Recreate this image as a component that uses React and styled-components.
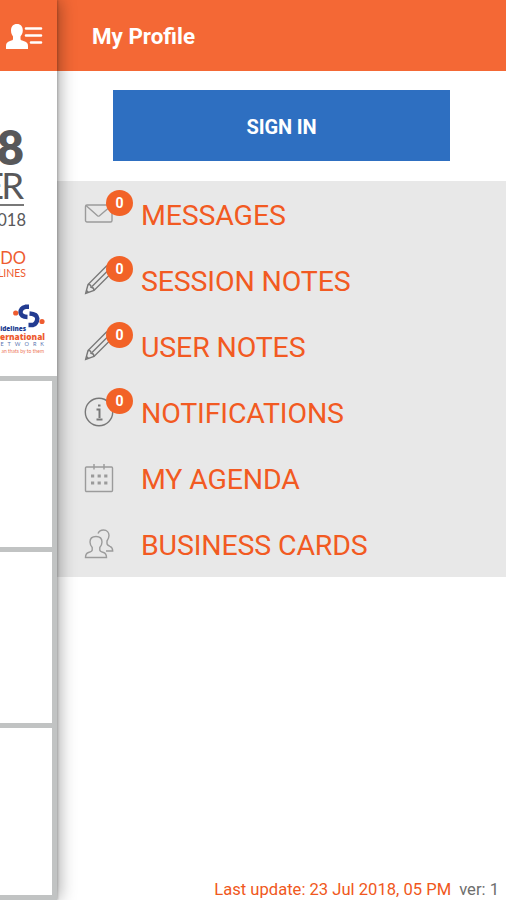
import React from 'react';
import styled, { createGlobalStyle } from 'styled-components';

const GlobalStyle = createGlobalStyle`
  * {
    box-sizing: border-box;
  }

  body {
    margin: 0;
    font-family: Roboto, 'Liberation Sans', sans-serif;
    background-color: white;
  }
`;

const StyledPage = styled.div`
  display: flex;
  height: 900px;
  width: 506px;
  overflow: hidden;
`;

const StyledMain = styled.div`
  position: relative;
  z-index: 1;
  display: flex;
  flex-direction: column;
  flex: 0 0 57px;
  height: 900px;
  background-color: rgb(193, 195, 195);
  box-shadow: 1px 0 2px rgba(0, 0, 0, 0.18), 2px 0 16px rgba(0, 0, 0, 0.36);
`;

const StyledMainHeader = styled.div`
  height: 71px;
  flex-shrink: 0;
  padding: 23px 0 0 6px;
  background-color: rgb(244, 104, 53);
`;

const StyledBanner = styled.div`
  display: flex;
  flex-direction: column;
  height: 305px;
  flex-shrink: 0;
  overflow: hidden;
  background-color: white;
`;

const StyledBannerText = styled.div`
  display: flex;
  flex-shrink: 0;
  justify-content: flex-end;
  width: ${(props) => props.$right}px;
  height: ${(props) => props.$height}px;
  line-height: ${(props) => props.$height}px;
  margin-top: ${(props) => props.$top || 0}px;
  font-family: ${(props) => props.$font || 'Lato'}, sans-serif;
  font-size: ${(props) => props.$size}px;
  font-weight: ${(props) => props.$weight || 400};
  letter-spacing: ${(props) => props.$spacing || 0}px;
  color: ${(props) => props.$color || 'rgb(88, 88, 90)'};
  white-space: nowrap;
`;

const StyledRule = styled.div`
  width: 24px;
  height: 2px;
  margin-top: 2px;
  flex-shrink: 0;
  background-color: rgb(120, 120, 120);
`;

const StyledLogo = styled.svg`
  display: block;
  flex-shrink: 0;
  margin: 24px 0 0 12px;
`;

const StyledTiles = styled.div`
  display: flex;
  flex-direction: column;
  gap: 5px;
  padding: 5px 5px 5px 0;
`;

const StyledTile = styled.div`
  height: ${(props) => props.$height}px;
  background-color: white;
`;

const StyledDrawer = styled.div`
  display: flex;
  flex-direction: column;
  flex: 1;
  background-color: white;
`;

const StyledDrawerHeader = styled.div`
  height: 71px;
  padding-left: 35px;
  line-height: 73px;
  background-color: rgb(244, 104, 53);
  color: white;
  font-size: 22.4px;
  font-weight: 700;
`;

const StyledSignInArea = styled.div`
  height: 110px;
  padding: 19px 56px 20px;
`;

const StyledSignIn = styled.button`
  display: block;
  width: 100%;
  height: 71px;
  padding: 2px 0 0;
  border: none;
  background-color: rgb(46, 111, 193);
  color: white;
  font-family: inherit;
  font-size: 20px;
  font-weight: 700;
  letter-spacing: -0.1px;
`;

const StyledMenu = styled.div`
  height: 396px;
  background-color: rgb(232, 232, 232);
`;

const StyledItem = styled.div`
  display: flex;
  align-items: center;
  height: 66px;
  padding-left: 27px;
`;

const StyledIcon = styled.div`
  position: relative;
  width: 30px;
  height: 30px;
  margin-right: 27px;

  svg {
    display: block;
    fill: none;
    stroke: ${(props) => (props.$light ? 'rgb(155, 155, 155)' : 'rgb(120, 120, 120)')};
    stroke-width: 1.4;
  }
`;

const StyledBadge = styled.span`
  position: absolute;
  left: 22px;
  top: -9px;
  width: 27px;
  height: 26px;
  border-radius: 50%;
  background-color: rgb(242, 98, 39);
  color: white;
  font-size: 14px;
  font-weight: 700;
  line-height: 27px;
  text-align: center;
`;

const StyledLabel = styled.span`
  padding-top: 2px;
  color: rgb(242, 90, 34);
  font-size: 28.5px;
  font-weight: 400;
  letter-spacing: -0.15px;
  white-space: nowrap;
`;

const StyledFooter = styled.div`
  display: flex;
  justify-content: flex-end;
  gap: 8px;
  margin-top: auto;
  padding-right: 7px;
  height: 21px;
  line-height: 21px;
  color: rgb(110, 110, 110);
  font-size: 16.6px;
  white-space: nowrap;
`;

const StyledUpdated = styled.span`
  color: rgb(240, 88, 32);
`;

const ProfileIcon = () => (
  <svg width="37" height="28" viewBox="0 0 37 28" fill="white">
    <path d="M11 1C7 1 5 3.500 5 7.500c0 3 1 4.500 2 6v2.500c0 1-1 1.500-3 2C1.500 18.800 0 20 0 23v3h22v-3c0-3-1.500-4.200-4.500-5-2-.5-3-1-3-2v-2.500c1-1.500 2.300-3 2.300-6C16.800 3.500 14.800 1 11 1z" />
    <path d="M20 5.500h15M20 12.500h15M25 19.500h10" stroke="white" strokeWidth="2.600" strokeLinecap="round" />
  </svg>
);

const MailIcon = () => (
  <svg width="30" height="30" viewBox="0 0 30 30">
    <rect x="1.500" y="6" width="26.500" height="17" rx="1.500" />
    <path d="M2 6.500l11.500 10.200q1 .8 2 0L27.500 6.500" />
  </svg>
);

const PencilIcon = () => (
  <svg width="30" height="30" viewBox="0 0 30 30">
    <path d="M1.700 28.300L4 19.500 22.500 1l6 6L10 25.500z" />
    <path d="M4 19.500q3.200-.2 3 2.800 3 0 3 3.200M8 21.500L24 5.500M2.500 25.500l2 2" />
  </svg>
);

const InfoIcon = () => (
  <svg width="30" height="30" viewBox="0 0 30 30">
    <circle cx="15" cy="15" r="13.700" />
    <path d="M12.500 12.500h3v8.500M12.500 22.500h6M14 8.500h2.500" strokeWidth="2" />
  </svg>
);

const CalendarIcon = () => (
  <svg width="30" height="30" viewBox="0 0 30 30">
    <rect x="1.500" y="4" width="27" height="24.500" rx="1" />
    <path d="M10 1v5.500M20 1v5.500" />
    <path d="M7 13h3.200M13.600 13h3.200M20.200 13h3.200M7 20h3.200M13.600 20h3.200M20.200 20h3.200" strokeWidth="3.200" />
  </svg>
);

const PeopleIcon = () => (
  <svg width="30" height="30" viewBox="0 0 30 30">
    <path d="M12 7.500C8 7.500 6 10 6 13c0 2.500 1 4 2.200 5.500V21c0 1.500-1.700 2-3.700 2.500-2 .7-3 2-3 5h21c0-3-1-4.300-3-5-2-.5-3.700-1-3.700-2.500v-2.500c1.200-1.500 2.200-3 2.200-5.500 0-3-2-5.500-6-5.500z" />
    <path d="M14 4.500C15 2 17 1 19.500 1c3.500 0 5.500 2.500 5.500 5.500 0 2.500-1 4-2 5.500v2.500c0 1.500 1 2 3 2.800 2 .7 2.700 2 2.700 4.700H22" />
  </svg>
);

const items = [
  { label: 'MESSAGES', icon: <MailIcon />, badge: '0', light: true },
  { label: 'SESSION NOTES', icon: <PencilIcon />, badge: '0' },
  { label: 'USER NOTES', icon: <PencilIcon />, badge: '0' },
  { label: 'NOTIFICATIONS', icon: <InfoIcon />, badge: '0' },
  { label: 'MY AGENDA', icon: <CalendarIcon />, light: true },
  { label: 'BUSINESS CARDS', icon: <PeopleIcon />, light: true },
];

const Banner = () => (
  <StyledBanner>
    <StyledBannerText $right={23} $height={48} $top={52} $size={47} $weight={800} $spacing={-1}>8</StyledBannerText>
    <StyledBannerText $right={21} $height={34} $top={-3} $size={36.5} $spacing={-3}>ER</StyledBannerText>
    <StyledRule />
    <StyledBannerText $right={26} $height={26} $top={1} $size={16.5}>018</StyledBannerText>
    <StyledBannerText $right={26} $height={18} $top={16} $size={16.5} $color="rgb(238, 92, 48)">DO</StyledBannerText>
    <StyledBannerText $right={26} $height={13} $size={10.5} $color="rgb(238, 92, 48)">LINES</StyledBannerText>
    <StyledLogo width="34" height="25" viewBox="0 0 34 25" fill="none">
      <path d="M17 2.800h-3.500Q8.500 4 8.500 8.500 9 12.800 15.500 13" stroke="rgb(35, 60, 145)" strokeWidth="4.400" />
      <path d="M17.500 9.500Q25 10 25.300 14.500 25 19.500 21 21h-4.500" stroke="rgb(35, 60, 145)" strokeWidth="4.400" />
      <circle cx="3.700" cy="9" r="2.600" fill="rgb(238, 92, 48)" />
      <circle cx="30" cy="17.500" r="2.600" fill="rgb(238, 92, 48)" />
    </StyledLogo>
    <StyledBannerText $right={26} $height={8} $top={-4} $size={6.4} $weight={800} $font="Open Sans" $color="rgb(35, 60, 145)">idelines</StyledBannerText>
    <StyledBannerText $right={45} $height={8} $size={8.3} $weight={800} $font="Open Sans" $color="rgb(238, 92, 48)">ernational</StyledBannerText>
    <StyledBannerText $right={48} $height={7} $size={5.5} $spacing={4} $color="rgb(90, 115, 175)">ETWORK</StyledBannerText>
    <StyledBannerText $right={44} $height={6} $size={5} $color="rgb(238, 120, 90)">an thats by to them</StyledBannerText>
  </StyledBanner>
);

export default function App() {
  return (
    <>
      <GlobalStyle />
      <StyledPage>
        <StyledMain>
          <StyledMainHeader>
            <ProfileIcon />
          </StyledMainHeader>
          <Banner />
          <StyledTiles>
            <StyledTile $height={166} />
            <StyledTile $height={171} />
            <StyledTile $height={167} />
          </StyledTiles>
        </StyledMain>
        <StyledDrawer>
          <StyledDrawerHeader>My Profile</StyledDrawerHeader>
          <StyledSignInArea>
            <StyledSignIn>SIGN IN</StyledSignIn>
          </StyledSignInArea>
          <StyledMenu>
            {items.map((item) => (
              <StyledItem key={item.label}>
                <StyledIcon $light={item.light}>
                  {item.icon}
                  {item.badge && <StyledBadge>{item.badge}</StyledBadge>}
                </StyledIcon>
                <StyledLabel>{item.label}</StyledLabel>
              </StyledItem>
            ))}
          </StyledMenu>
          <StyledFooter>
            <StyledUpdated>Last update: 23 Jul 2018, 05 PM</StyledUpdated>
            <span>ver: 1</span>
          </StyledFooter>
        </StyledDrawer>
      </StyledPage>
    </>
  );
}
